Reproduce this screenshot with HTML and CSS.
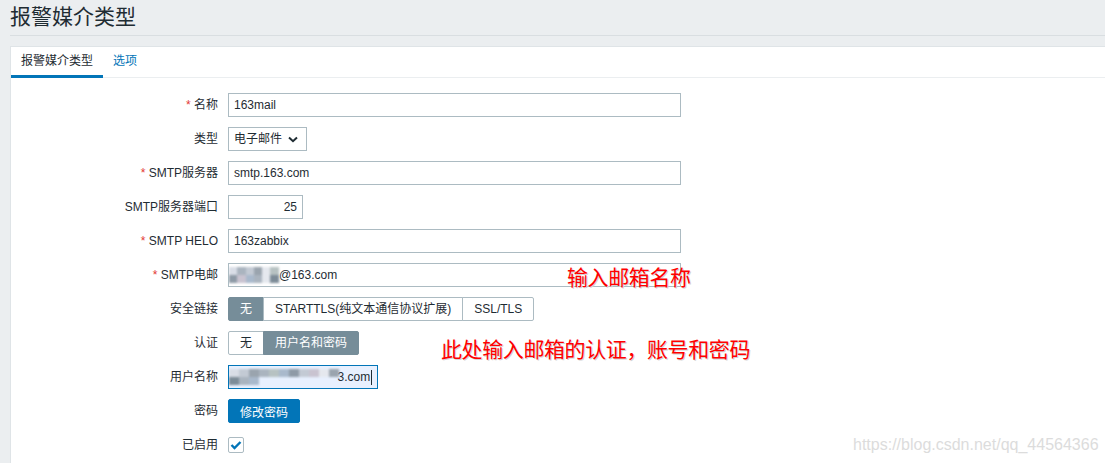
FILE: index.html
```html
<!DOCTYPE html>
<html lang="zh">
<head>
<meta charset="utf-8">
<title>报警媒介类型</title>
<link rel="stylesheet" href="styles.css">
</head>
<body>
<header class="page-header">
  <h1>报警媒介类型</h1>
</header>
<main class="card">
  <nav class="tabs">
    <div class="tab active">报警媒介类型</div>
    <div class="tab link">选项</div>
  </nav>
  <form class="form">
    <label class="lbl"><span class="req">*</span> 名称</label>
    <div class="field"><div class="input w453">163mail</div></div>

    <label class="lbl">类型</label>
    <div class="field"><div class="input select">电子邮件<svg class="chev" width="10" height="7" viewBox="0 0 10 7"><path d="M1 1.5 L5 5.2 L9 1.5" fill="none" stroke="#1f2c33" stroke-width="2"/></svg></div></div>

    <label class="lbl"><span class="req">*</span> SMTP服务器</label>
    <div class="field"><div class="input w453">smtp.163.com</div></div>

    <label class="lbl">SMTP服务器端口</label>
    <div class="field"><div class="input w75 right">25</div></div>

    <label class="lbl"><span class="req">*</span> SMTP HELO</label>
    <div class="field"><div class="input w453">163zabbix</div></div>

    <label class="lbl"><span class="req">*</span> SMTP电邮</label>
    <div class="field"><div class="input w453 masked"><span class="mosaic m1"><i class="c1"></i><i class="c2"></i><i class="c3"></i><i class="c4"></i><i class="c5"></i><i class="c6"></i><i class="c7"></i><i class="c8"></i><i class="c9"></i><i class="c2"></i><i class="c5"></i><i class="c10"></i></span>@163.com</div></div>

    <label class="lbl">安全链接</label>
    <div class="field"><div class="seg"><span class="on">无</span><span>STARTTLS(纯文本通信协议扩展)</span><span>SSL/TLS</span></div></div>

    <label class="lbl">认证</label>
    <div class="field"><div class="seg"><span>无</span><span class="on">用户名和密码</span></div></div>

    <label class="lbl">用户名称</label>
    <div class="field"><div class="input w150 focus masked"><span class="mosaic m2"><i class="c1"></i><i class="c3"></i><i class="c4"></i><i class="c2"></i><i class="c6"></i><i class="c9"></i><i class="c7"></i><i class="c3"></i><i class="c8"></i><i class="c5"></i><i class="c4"></i><i class="c10"></i><i class="c2"></i><i class="c9"></i></span>3.com<span class="caret"></span></div></div>

    <label class="lbl">密码</label>
    <div class="field"><button type="button" class="btn">修改密码</button></div>

    <label class="lbl">已启用</label>
    <div class="field"><span class="check"><svg width="12" height="10" viewBox="0 0 12 10"><path d="M1.5 5 L4.5 8 L10.5 2" fill="none" stroke="#0275b8" stroke-width="2.4"/></svg></span></div>
  </form>
  <div class="note note1">输入邮箱名称</div>
  <div class="note note2">此处输入邮箱的认证，账号和密码</div>
  <div class="watermark">https://blog.csdn.net/qq_44564366</div>
</main>
</body>
</html>
```
FILE: styles.css
```css
* { box-sizing: border-box; }
html, body { height: 100%; }
body {
  margin: 0;
  background: #ebeef0;
  color: #1f2c33;
  font-family: "Liberation Sans", Arial, "Noto Sans CJK SC", sans-serif;
  font-size: 12px;
  overflow: hidden;
  display: flex;
  flex-direction: column;
}
.page-header {
  margin-left: 10px;
  height: 36px;
  flex: none;
  padding-top: 4px;
  border-bottom: 1px solid #d9dee1;
}
.page-header h1 {
  margin: 0;
  font-weight: normal;
  font-size: 21px;
  line-height: 26px;
  color: #1f2c33;
}
.card {
  position: relative;
  flex: 1;
  min-height: 0;
  overflow: hidden;
  margin: 10px 0 0 10px;
  background: #fff;
  border: 1px solid #dfe4e7;
  border-right: none;
  border-bottom: none;
}
.tabs {
  display: flex;
  height: 31px;
  border-bottom: 1px solid #ebeef0;
}
.tab {
  height: 31px;
  padding: 0 10px;
  line-height: 28px;
}
.tab.active { border-bottom: 3px solid #0275b8; }
.tab.link { color: #0275b8; }
.form {
  display: grid;
  grid-template-columns: 207px auto;
  column-gap: 10px;
  row-gap: 10px;
  padding-top: 15px;
  grid-auto-rows: 24px;
}
.lbl {
  text-align: right;
  line-height: 24px;
  white-space: nowrap;
}
.req { color: #e33734; }
.field { display: flex; align-items: center; }
.input {
  height: 24px;
  border: 1px solid #acbbc2;
  padding: 0 5px;
  line-height: 22px;
  background: #fff;
  white-space: nowrap;
  overflow: hidden;
  display: flex;
  align-items: center;
}
.w453 { width: 453px; }
.w75 { width: 75px; }
.w150 { width: 150px; }
.right { justify-content: flex-end; }
.select { width: 79px; justify-content: space-between; padding-right: 8px; }
.chev { display: block; }
.focus { border-color: #0275b8; background: #e8f0fe; padding-left: 0; }
.masked { padding-left: 0; }
.mosaic {
  display: inline-flex;
  flex-wrap: wrap;
  height: 20px;
  align-content: center;
  filter: blur(1.2px);
}
.m1 { width: 50px; }
.m2 { width: 142px; margin-right: -3px; }
.mosaic i { display: block; width: 8px; height: 8px; }
.m1 i { width: 8.3px; }
.m2 i { width: 10px; }
.c1 { background: #d9dde6; }
.c2 { background: #aab4bf; }
.c3 { background: #c3cad4; }
.c4 { background: #9aa4ae; }
.c5 { background: #e5e8ee; }
.c6 { background: #b7c2c2; }
.c7 { background: #8e9aa6; }
.c8 { background: #c9c3d0; }
.c9 { background: #a9b9cc; }
.c10 { background: #7d8c98; }
.caret { display: inline-block; width: 1px; height: 15px; background: #1f2c33; margin-left: 1px; }
.seg { display: flex; height: 24px; }
.seg span {
  border: 1px solid #acbbc2;
  margin-left: -1px;
  padding: 0 11px;
  line-height: 22px;
  background: #fff;
  white-space: nowrap;
}
.seg span:first-child { margin-left: 0; border-radius: 2px 0 0 2px; }
.seg span:last-child { border-radius: 0 2px 2px 0; }
.seg span.on { background: #768d99; border-color: #768d99; color: #fff; }
.btn {
  height: 24px;
  width: 72px;
  border: 1px solid #0275b8;
  background: #0275b8;
  color: #fff;
  border-radius: 2px;
  font: inherit;
  padding: 0;
}
.check {
  width: 16px;
  height: 16px;
  border: 1px solid #acbbc2;
  border-radius: 2px;
  display: flex;
  align-items: center;
  justify-content: center;
}
.note {
  position: absolute;
  color: #ff0000;
  font-family: "Noto Sans CJK SC", sans-serif;
  font-size: 21px;
  line-height: 26px;
  letter-spacing: -0.4px;
  text-shadow: 1px 1px 0 #d4d4d4;
  white-space: nowrap;
}
.note1 { left: 556px; top: 216px; }
.note2 { left: 430px; top: 288px; }
.watermark {
  position: absolute;
  left: 842px;
  top: 389px;
  color: #dcdcdc;
  font-size: 16px;
  line-height: 18px;
  white-space: nowrap;
}
```
